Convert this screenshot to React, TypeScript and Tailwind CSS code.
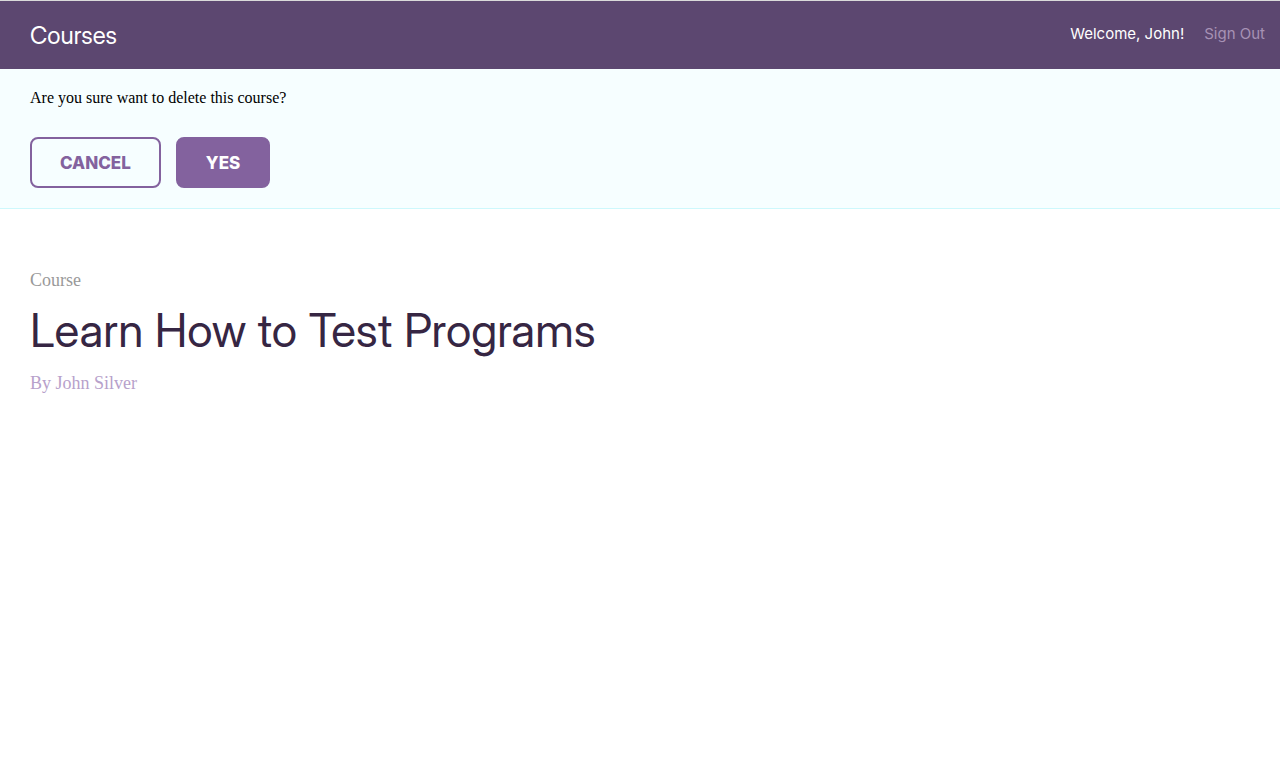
export default function App() {
  return (
    <div className="min-h-screen bg-white font-['Liberation_Serif',serif] text-black">
      <header className="flex items-start justify-between border-t border-[#dadada] bg-[#5c4770] pr-[15px] pl-[30px] font-['Inter',sans-serif]">
        <a href="#" className="pt-[18px] pb-4 font-['Inter_Display','Inter',sans-serif] text-2xl leading-[34px] text-white">Courses</a>
        <nav className="flex gap-5 pt-[21px] text-[15px] leading-6">
          <span className="text-white">Welcome, John!</span>
          <a href="#" className="text-[#a792b5]">Sign Out</a>
        </nav>
      </header>
      <section className="border-b border-[#cdf8fc] bg-[#f6feff] px-[30px] pt-[17px] pb-5">
        <p className="text-base leading-6">Are you sure want to delete this course?</p>
        <div className="mt-[27px] flex gap-[15px] font-['Inter',sans-serif] text-[17px] font-extrabold">
          <button type="button" className="h-[51px] rounded-lg border-2 border-[#83629e] px-7 pt-0.5 text-[#83629e]">CANCEL</button>
          <button type="button" className="h-[51px] rounded-lg border-2 border-[#83629e] bg-[#83629e] px-7 pt-0.5 text-white">YES</button>
        </div>
      </section>
      <main className="px-[30px] pt-[59px]">
        <p className="text-lg leading-6 text-[#999999]">Course</p>
        <h1 className="mt-2 font-['Inter_Display','Inter',sans-serif] text-[46px] leading-[60px] text-[#362643]">Learn How to Test Programs</h1>
        <p className="mt-[11px] text-lg leading-6 text-[#b7a1cb]">By John Silver</p>
      </main>
    </div>
  );
}
